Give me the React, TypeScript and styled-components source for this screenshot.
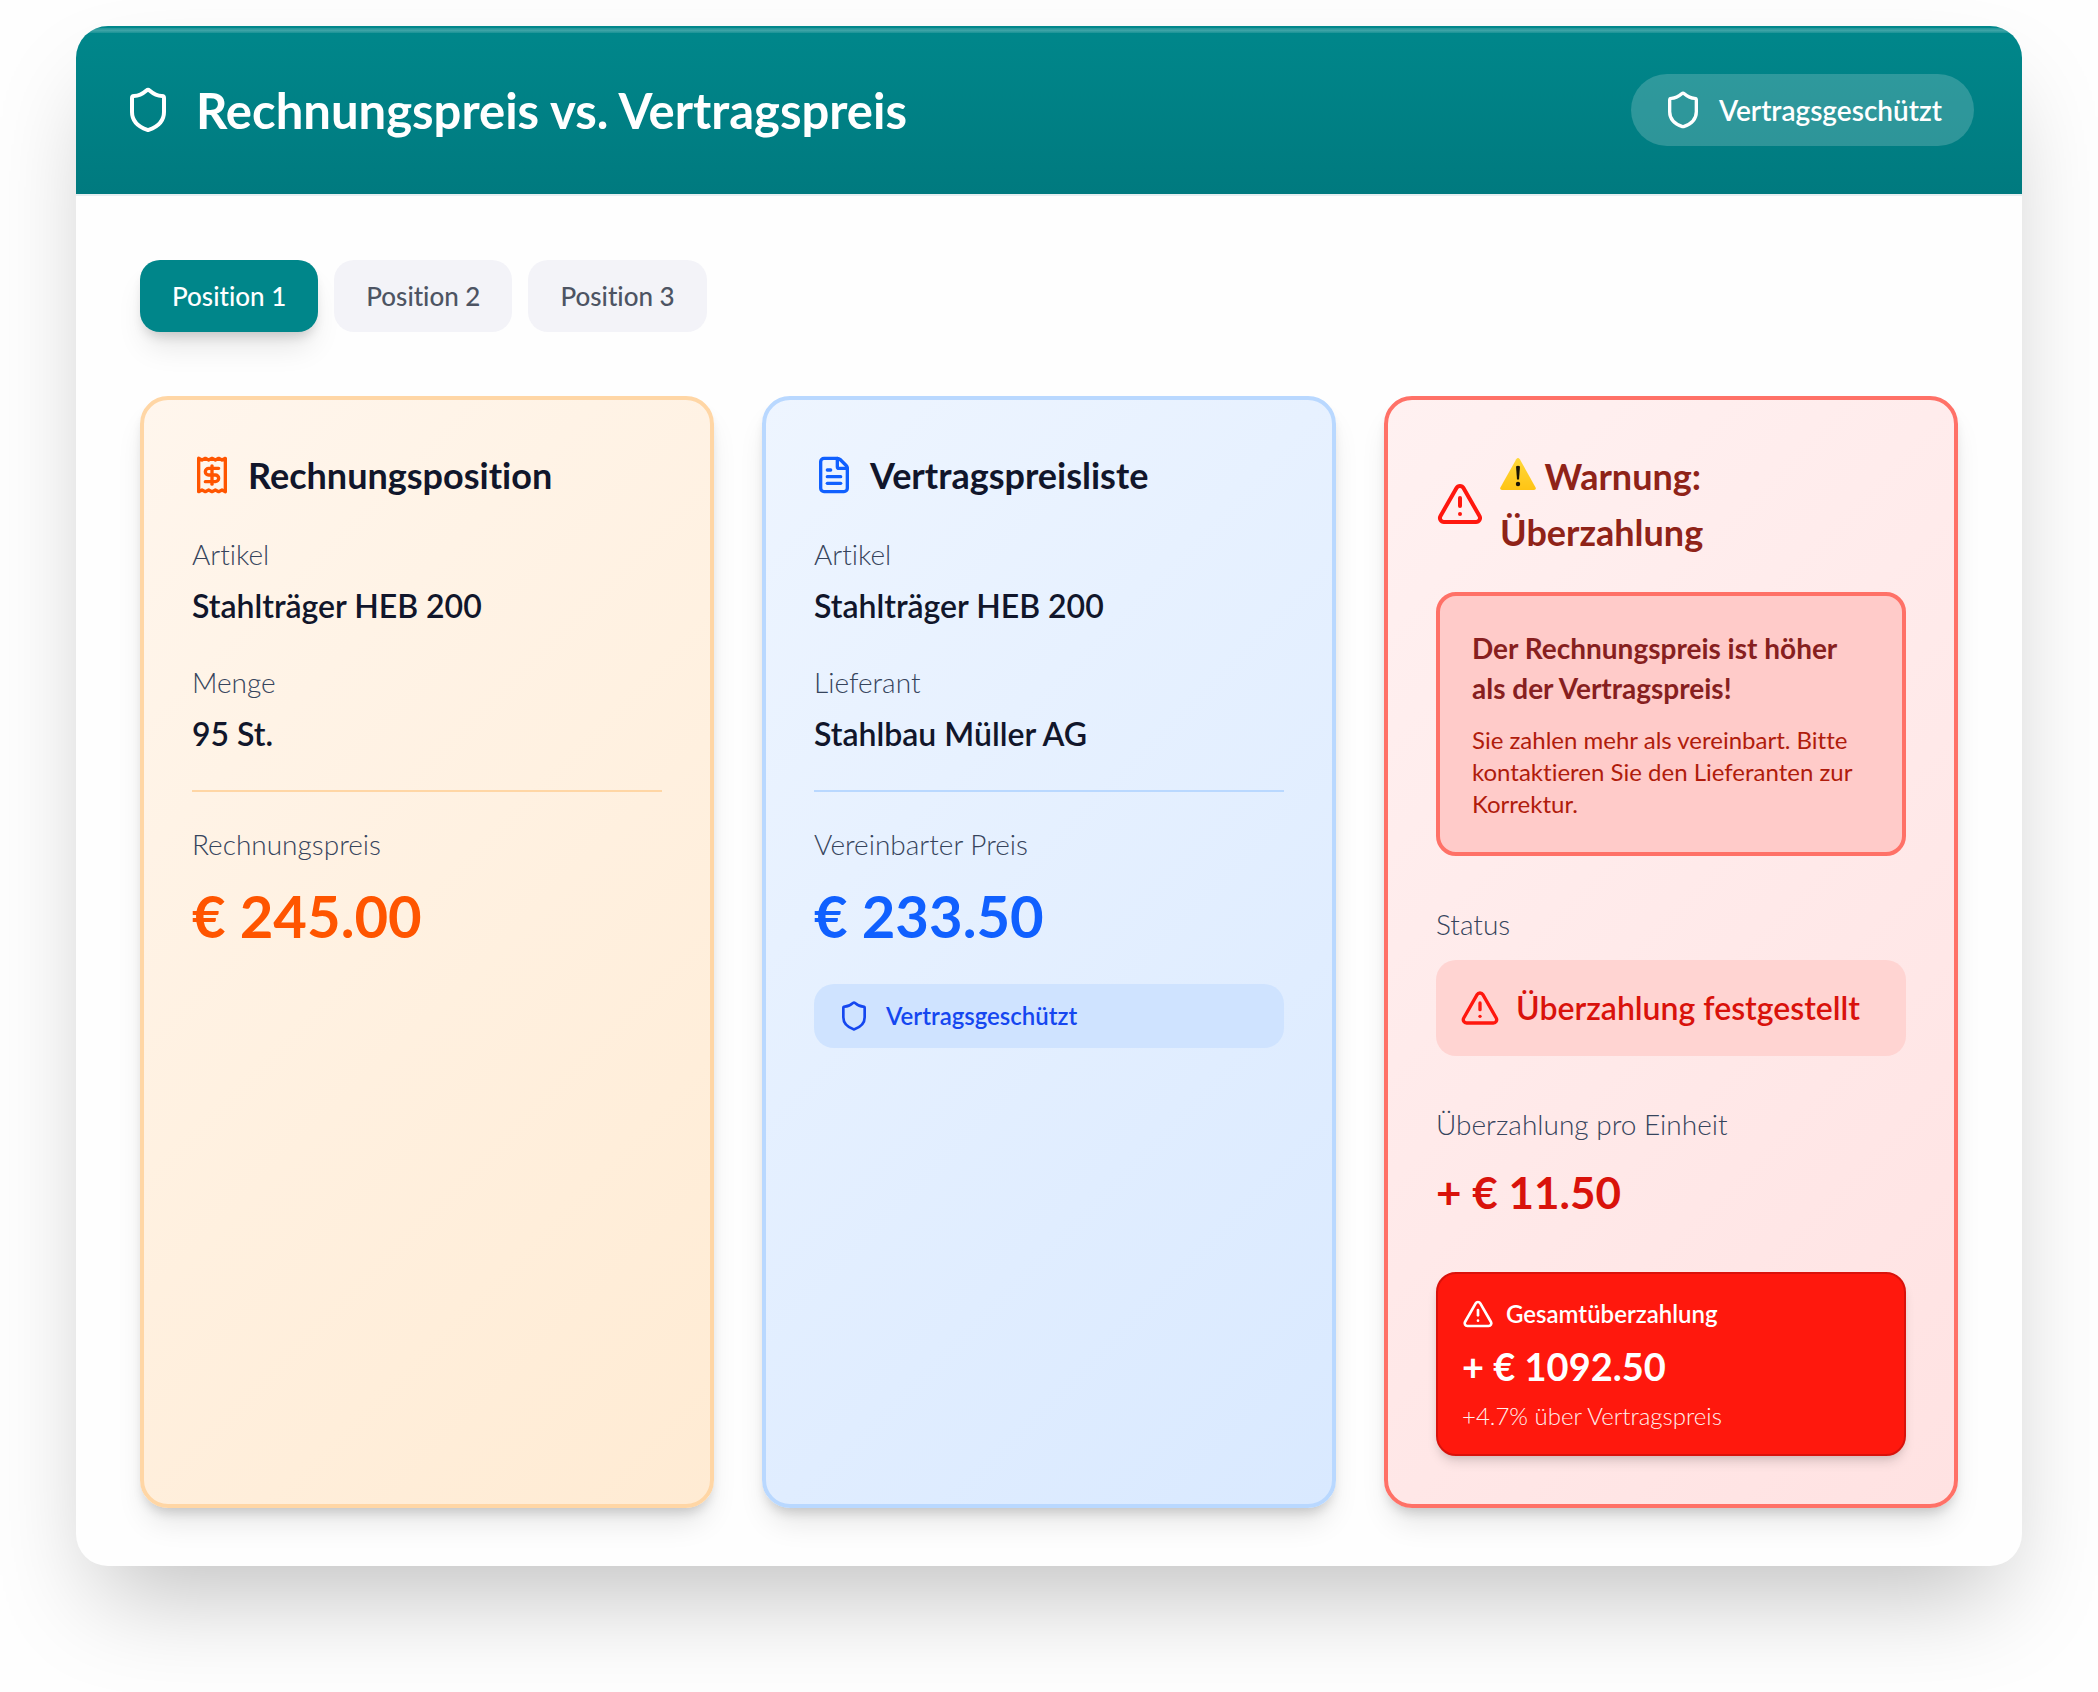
import React, { useState } from "react";
import styled, { createGlobalStyle, css } from "styled-components";
import { FileText, Shield, TriangleAlert } from "lucide-react";

const GlobalStyle = createGlobalStyle`
  *, *::before, *::after { box-sizing: border-box; }
  body {
    margin: 0;
    background: #fefefe;
    color: #11162b;
    font-family: Lato, "Open Sans", sans-serif;
    font-variant-ligatures: none;
    -webkit-font-smoothing: antialiased;
  }
  h1, h2, p, dl, dt, dd { margin: 0; }
  svg { flex-shrink: 0; display: block; }
`;

const Page = styled.div`
  padding: 26px 76px 126px;
`;

const Panel = styled.main`
  border-radius: 32px;
  background: #fefefe;
  box-shadow: 0 50px 100px -24px rgba(0, 0, 0, 0.25);
`;

const PanelHeader = styled.header`
  display: flex;
  align-items: center;
  justify-content: space-between;
  padding: 48px;
  border-bottom: 2px solid #e6eef0;
  border-radius: 32px 32px 0 0;
  color: #ffffff;
  background:
    linear-gradient(rgba(255, 255, 255, 0.12), rgba(255, 255, 255, 0.24), rgba(255, 255, 255, 0.1)) 0 2px / 100% 5px no-repeat padding-box,
    linear-gradient(#00878b, #007a7f) padding-box;
`;

const TitleGroup = styled.div`
  display: flex;
  align-items: center;
  gap: 24px;
`;

const Title = styled.h1`
  font-size: 49px;
  line-height: 64px;
  font-weight: 700;
`;

const HeaderBadge = styled.span`
  display: flex;
  align-items: center;
  gap: 16px;
  padding: 16px 32px;
  border-radius: 36px;
  background: rgba(255, 255, 255, 0.18);
  font-size: 28px;
  line-height: 40px;
  font-weight: 600;
`;

const PanelBody = styled.div`
  display: grid;
  gap: 64px;
  padding: 64px 64px 58px;
`;

const Tabs = styled.div`
  display: flex;
  gap: 16px;
`;

const Tab = styled.button<{ $active: boolean }>`
  padding: 16px 32px;
  border: 0;
  border-radius: 20px;
  font: inherit;
  font-size: 26px;
  line-height: 40px;
  font-weight: 500;
  cursor: pointer;
  color: #4d5463;
  background: #f3f3f8;
  ${({ $active }) =>
    $active &&
    css`
      color: #ffffff;
      background: #00868a;
      box-shadow: 0 20px 30px -6px rgba(0, 0, 0, 0.1), 0 8px 12px -4px rgba(0, 0, 0, 0.16);
    `}
`;

const Columns = styled.div`
  display: grid;
  grid-template-columns: repeat(3, minmax(0, 1fr));
  gap: 48px;
`;

type Tone = "orange" | "blue" | "red";

const tones = {
  orange: { border: "#ffd6a5", from: "#fff6ed", to: "#ffebd3", accent: "#ff5500", title: "#11162b" },
  blue: { border: "#b9d8ff", from: "#eef5ff", to: "#d9e9ff", accent: "#1060ff", title: "#11162b" },
  red: { border: "#ff7167", from: "#fff1f1", to: "#ffe2e2", accent: "#ff170e", title: "#8f2318" },
};

const Card = styled.section<{ $tone: Tone }>`
  padding: 48px;
  border: 4px solid ${({ $tone }) => tones[$tone].border};
  border-radius: 28px;
  background: linear-gradient(135deg, ${({ $tone }) => tones[$tone].from}, ${({ $tone }) => tones[$tone].to});
  box-shadow: 0 20px 30px -6px rgba(0, 0, 0, 0.1), 0 8px 12px -4px rgba(0, 0, 0, 0.16);
`;

const CardHeader = styled.div<{ $tone: Tone }>`
  display: flex;
  align-items: center;
  gap: 16px;
  margin-bottom: 32px;
  color: ${({ $tone }) => tones[$tone].accent};
`;

const CardTitle = styled.h2<{ $tone: Tone }>`
  font-size: 36px;
  line-height: ${({ $tone }) => ($tone === "red" ? 56 : 54)}px;
  font-weight: 700;
  color: ${({ $tone }) => tones[$tone].title};

  svg {
    display: inline-block;
    vertical-align: baseline;
  }
`;

const Fields = styled.dl`
  display: grid;
  gap: 32px;
`;

const Field = styled.div`
  display: grid;
  gap: 8px;
`;

const PriceField = styled.dl<{ $tone: Tone }>`
  display: grid;
  gap: 16px;
  margin-top: 32px;
  padding-top: 32px;
  border-top: 2px solid ${({ $tone }) => tones[$tone].border};
`;

const RedField = styled.dl`
  display: grid;
  gap: 16px;
  margin-top: 48px;
`;

const Label = styled.dt`
  font-size: 28px;
  line-height: 40px;
  font-weight: 300;
  color: #36445c;
`;

const Value = styled.dd`
  font-size: 32px;
  line-height: 48px;
  font-weight: 600;
`;

const Price = styled.dd<{ $tone: Tone }>`
  font-size: 58px;
  line-height: 72px;
  font-weight: 700;
  color: ${({ $tone }) => tones[$tone].accent};
`;

const UnitDifference = styled.dd`
  font-size: 44px;
  line-height: 64px;
  font-weight: 700;
  color: #d9120b;
`;

const ContractNote = styled.div`
  display: flex;
  align-items: center;
  gap: 16px;
  margin-top: 32px;
  padding: 16px 24px;
  border-radius: 20px;
  font-size: 24px;
  line-height: 32px;
  font-weight: 600;
  color: #1547f0;
  background: #cfe3ff;
`;

const Alert = styled.div`
  display: grid;
  gap: 16px;
  padding: 32px;
  border: 4px solid #ff7167;
  border-radius: 20px;
  background: #ffcbc9;
`;

const AlertTitle = styled.p`
  font-size: 28px;
  line-height: 40px;
  font-weight: 700;
  color: #871f20;
`;

const AlertText = styled.p`
  font-size: 24px;
  line-height: 32px;
  font-weight: 400;
  color: #b01c0c;
`;

const StatusBox = styled.dd`
  display: flex;
  align-items: center;
  gap: 16px;
  padding: 24px;
  border-radius: 20px;
  font-size: 32px;
  line-height: 48px;
  font-weight: 600;
  color: #d9120b;
  background: #ffd4d2;

  svg { color: #ff170e; }
`;

const TotalBox = styled.div`
  display: grid;
  margin-top: 48px;
  padding: 24px 24px 22px;
  border: 2px solid #d9120b;
  border-radius: 20px;
  color: #ffffff;
  background: #ff180d;
  box-shadow: 0 8px 12px -2px rgba(0, 0, 0, 0.12), 0 4px 8px -4px rgba(0, 0, 0, 0.12);
`;

const TotalLabel = styled.div`
  display: flex;
  align-items: center;
  gap: 12px;
  margin-bottom: 8px;
  font-size: 24px;
  line-height: 32px;
  font-weight: 600;
`;

const TotalAmount = styled.p`
  margin-bottom: 6px;
  font-size: 38px;
  line-height: 56px;
  font-weight: 700;
`;

const TotalHint = styled.p`
  font-size: 24px;
  line-height: 32px;
  font-weight: 300;
  color: #fff0ee;
`;

const ReceiptIcon = () => (
  <svg width="40" height="40" viewBox="0 0 24 24" fill="none" stroke="currentColor" strokeWidth="2" strokeLinecap="round" strokeLinejoin="round" aria-hidden="true">
    <path d="M4 2v20l2-1 2 1 2-1 2 1 2-1 2 1 2-1 2 1V2l-2 1-2-1-2 1-2-1-2 1-2-1-2 1Z" />
    <path d="M16 8h-6a2 2 0 1 0 0 4h4a2 2 0 1 1 0 4H8" />
    <path d="M12 17.5v-11" />
  </svg>
);

const WarningSign = () => (
  <svg width="36" height="32" viewBox="0 0 36 32" role="img" aria-label="Warnung">
    <defs>
      <linearGradient id="sign" x1="0" y1="0" x2="0" y2="1">
        <stop offset="0" stopColor="#ffd83a" />
        <stop offset="1" stopColor="#ffc414" />
      </linearGradient>
    </defs>
    <path d="M16.2 1.2Q18-1 19.8 1.2L35.6 29.4Q36.4 31.8 34 32H2Q-.4 31.8.4 29.4Z" fill="url(#sign)" />
    <path d="M16 8.5Q18 7 20 8.5L19 21.5H17Z" fill="#1a1405" />
    <circle cx="18" cy="26" r="2.2" fill="#1a1405" />
  </svg>
);

const positions = ["Position 1", "Position 2", "Position 3"];

export default function App() {
  const [active, setActive] = useState(0);

  return (
    <>
      <GlobalStyle />
      <Page>
        <Panel>
          <PanelHeader>
            <TitleGroup>
              <Shield size={48} />
              <Title>Rechnungspreis vs. Vertragspreis</Title>
            </TitleGroup>
            <HeaderBadge>
              <Shield size={40} />
              Vertragsgeschützt
            </HeaderBadge>
          </PanelHeader>

          <PanelBody>
            <Tabs role="tablist">
              {positions.map((name, index) => (
                <Tab
                  key={name}
                  type="button"
                  role="tab"
                  aria-selected={index === active}
                  $active={index === active}
                  onClick={() => setActive(index)}
                >
                  {name}
                </Tab>
              ))}
            </Tabs>

            <Columns>
              <Card $tone="orange">
                <CardHeader $tone="orange">
                  <ReceiptIcon />
                  <CardTitle $tone="orange">Rechnungsposition</CardTitle>
                </CardHeader>
                <Fields>
                  <Field>
                    <Label>Artikel</Label>
                    <Value>Stahlträger HEB 200</Value>
                  </Field>
                  <Field>
                    <Label>Menge</Label>
                    <Value>95 St.</Value>
                  </Field>
                </Fields>
                <PriceField $tone="orange">
                  <Label>Rechnungspreis</Label>
                  <Price $tone="orange">€ 245.00</Price>
                </PriceField>
              </Card>

              <Card $tone="blue">
                <CardHeader $tone="blue">
                  <FileText size={40} />
                  <CardTitle $tone="blue">Vertragspreisliste</CardTitle>
                </CardHeader>
                <Fields>
                  <Field>
                    <Label>Artikel</Label>
                    <Value>Stahlträger HEB 200</Value>
                  </Field>
                  <Field>
                    <Label>Lieferant</Label>
                    <Value>Stahlbau Müller AG</Value>
                  </Field>
                </Fields>
                <PriceField $tone="blue">
                  <Label>Vereinbarter Preis</Label>
                  <Price $tone="blue">€ 233.50</Price>
                </PriceField>
                <ContractNote>
                  <Shield size={32} />
                  Vertragsgeschützt
                </ContractNote>
              </Card>

              <Card $tone="red">
                <CardHeader $tone="red">
                  <TriangleAlert size={48} />
                  <CardTitle $tone="red">
                    <WarningSign /> Warnung:
                    <br />
                    Überzahlung
                  </CardTitle>
                </CardHeader>
                <Alert role="alert">
                  <AlertTitle>Der Rechnungspreis ist höher als der Vertragspreis!</AlertTitle>
                  <AlertText>Sie zahlen mehr als vereinbart. Bitte kontaktieren Sie den Lieferanten zur Korrektur.</AlertText>
                </Alert>
                <RedField>
                  <Label>Status</Label>
                  <StatusBox>
                    <TriangleAlert size={40} />
                    Überzahlung festgestellt
                  </StatusBox>
                </RedField>
                <RedField>
                  <Label>Überzahlung pro Einheit</Label>
                  <UnitDifference>+ € 11.50</UnitDifference>
                </RedField>
                <TotalBox>
                  <TotalLabel>
                    <TriangleAlert size={32} />
                    Gesamtüberzahlung
                  </TotalLabel>
                  <TotalAmount>+ € 1092.50</TotalAmount>
                  <TotalHint>+4.7% über Vertragspreis</TotalHint>
                </TotalBox>
              </Card>
            </Columns>
          </PanelBody>
        </Panel>
      </Page>
    </>
  );
}
